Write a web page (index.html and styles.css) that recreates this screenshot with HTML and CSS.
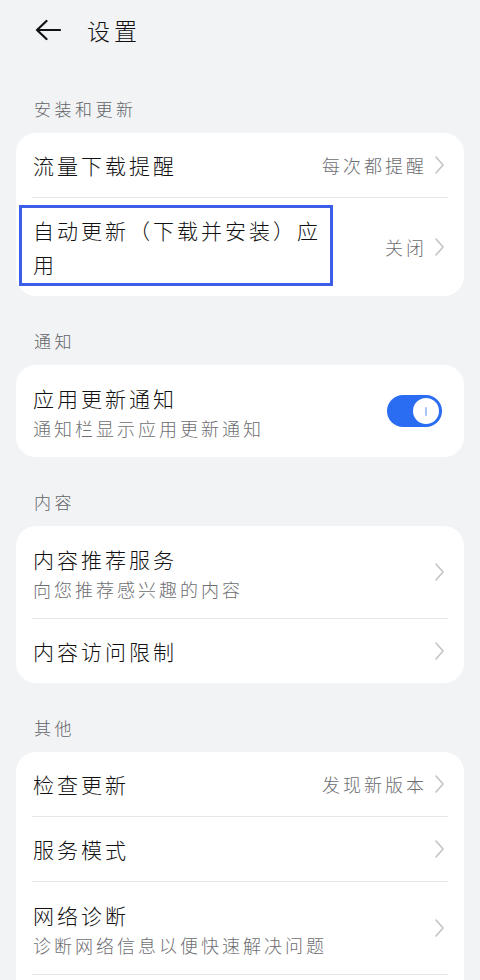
FILE: index.html
```html
<!DOCTYPE html>
<html lang="zh-CN">
<head>
<meta charset="utf-8">
<title>设置</title>
<link rel="stylesheet" href="styles.css">
</head>
<body>
<div class="page">
  <header class="topbar">
    <svg class="back" width="26" height="22" viewBox="0 0 26 22" aria-hidden="true">
      <path d="M25 11H2.5M11.5 2L2 11l9.5 9" fill="none" stroke="#111" stroke-width="2.2" stroke-linecap="round" stroke-linejoin="round"/>
    </svg>
    <h1 class="title">设置</h1>
  </header>

  <div class="label first">安装和更新</div>
  <section class="card">
    <div class="row">
      <div class="text"><div class="main">流量下载提醒</div></div>
      <div class="value">每次都提醒</div>
      <svg class="chev" width="9" height="18" viewBox="0 0 9 18"><path d="M1 1l7 8-7 8" fill="none" stroke="#c4c4c6" stroke-width="1.6" stroke-linecap="round" stroke-linejoin="round"/></svg>
    </div>
    <div class="row tall">
      <div class="text narrow"><div class="main">自动更新（下载并安装）应用</div></div>
      <div class="value">关闭</div>
      <svg class="chev" width="9" height="18" viewBox="0 0 9 18"><path d="M1 1l7 8-7 8" fill="none" stroke="#c4c4c6" stroke-width="1.6" stroke-linecap="round" stroke-linejoin="round"/></svg>
      <div class="highlight"></div>
    </div>
  </section>

  <div class="label">通知</div>
  <section class="card">
    <div class="row sub">
      <div class="text">
        <div class="main">应用更新通知</div>
        <div class="desc">通知栏显示应用更新通知</div>
      </div>
      <div class="switch"><span class="knob"><i></i></span></div>
    </div>
  </section>

  <div class="label">内容</div>
  <section class="card">
    <div class="row sub">
      <div class="text">
        <div class="main">内容推荐服务</div>
        <div class="desc">向您推荐感兴趣的内容</div>
      </div>
      <svg class="chev" width="9" height="18" viewBox="0 0 9 18"><path d="M1 1l7 8-7 8" fill="none" stroke="#c4c4c6" stroke-width="1.6" stroke-linecap="round" stroke-linejoin="round"/></svg>
    </div>
    <div class="row">
      <div class="text"><div class="main">内容访问限制</div></div>
      <svg class="chev" width="9" height="18" viewBox="0 0 9 18"><path d="M1 1l7 8-7 8" fill="none" stroke="#c4c4c6" stroke-width="1.6" stroke-linecap="round" stroke-linejoin="round"/></svg>
    </div>
  </section>

  <div class="label">其他</div>
  <section class="card">
    <div class="row">
      <div class="text"><div class="main">检查更新</div></div>
      <div class="value">发现新版本</div>
      <svg class="chev" width="9" height="18" viewBox="0 0 9 18"><path d="M1 1l7 8-7 8" fill="none" stroke="#c4c4c6" stroke-width="1.6" stroke-linecap="round" stroke-linejoin="round"/></svg>
    </div>
    <div class="row">
      <div class="text"><div class="main">服务模式</div></div>
      <svg class="chev" width="9" height="18" viewBox="0 0 9 18"><path d="M1 1l7 8-7 8" fill="none" stroke="#c4c4c6" stroke-width="1.6" stroke-linecap="round" stroke-linejoin="round"/></svg>
    </div>
    <div class="row sub">
      <div class="text">
        <div class="main">网络诊断</div>
        <div class="desc">诊断网络信息以便快速解决问题</div>
      </div>
      <svg class="chev" width="9" height="18" viewBox="0 0 9 18"><path d="M1 1l7 8-7 8" fill="none" stroke="#c4c4c6" stroke-width="1.6" stroke-linecap="round" stroke-linejoin="round"/></svg>
    </div>
    <div class="tail"></div>
  </section>
</div>
</body>
</html>
```

FILE: styles.css
```css
* { box-sizing: border-box; }
html, body {
  margin: 0;
  padding: 0;
  background: #f1f3f5;
}
body {
  font-family: "Noto Sans CJK SC", "Noto Sans", sans-serif;
  font-weight: 300;
  color: #111;
}
.page {
  width: 480px;
  padding: 0 16px 40px;
}
.topbar {
  height: 60px;
  display: flex;
  align-items: center;
  padding-left: 19px;
  margin-bottom: 4px;
}
.back { display: block; }
.title {
  margin: 0 0 0 26px;
  font-size: 23px;
  font-weight: 300;
  letter-spacing: 4px;
  line-height: 30px;
}
.label {
  padding: 33px 0 12px 18px;
  font-size: 17px;
  line-height: 24px;
  letter-spacing: 3.5px;
  color: #636467;
}
.card {
  background: #fff;
  border-radius: 20px;
  overflow: hidden;
}
.row {
  position: relative;
  margin: 0 16px;
  padding: 15px 4px 15px 1px;
  display: flex;
  align-items: center;
  min-height: 64px;
}
.row + .row { border-top: 1px solid #e6e7e9; }
.row.tall { padding-top: 15px; padding-bottom: 15px; }
.row.sub { padding-top: 16px; padding-bottom: 16px; min-height: 92px; }
.tail {
  margin: 0 16px;
  height: 40px;
  border-top: 1px solid #e6e7e9;
}
.text { flex: 1; min-width: 0; }
.text.narrow { flex: 0 0 300px; margin-right: auto; }
.main {
  font-size: 21px;
  line-height: 34px;
  letter-spacing: 3px;
  color: #111;
}
.desc {
  font-size: 18px;
  line-height: 26px;
  letter-spacing: 3px;
  color: #6d6e71;
}
.value {
  flex: none;
  font-size: 18px;
  line-height: 26px;
  letter-spacing: 3px;
  color: #6d6e71;
  margin-right: 8px;
  margin-left: 16px;
}
.chev { flex: none; display: block; }
.highlight {
  position: absolute;
  left: -13px;
  top: 7px;
  width: 314px;
  height: 81px;
  border: 3px solid #3b5de7;
  pointer-events: none;
}
.switch {
  flex: none;
  width: 55px;
  height: 32px;
  border-radius: 16px;
  background: #2a6cf2;
  margin-right: 2px;
  display: flex;
  align-items: center;
  justify-content: flex-end;
  padding-right: 3px;
}
.knob {
  width: 26px;
  height: 26px;
  border-radius: 50%;
  background: #fff;
  display: flex;
  align-items: center;
  justify-content: center;
}
.knob i {
  display: block;
  width: 2px;
  height: 9px;
  border-radius: 1px;
  background: #a9c3f6;
}
```
